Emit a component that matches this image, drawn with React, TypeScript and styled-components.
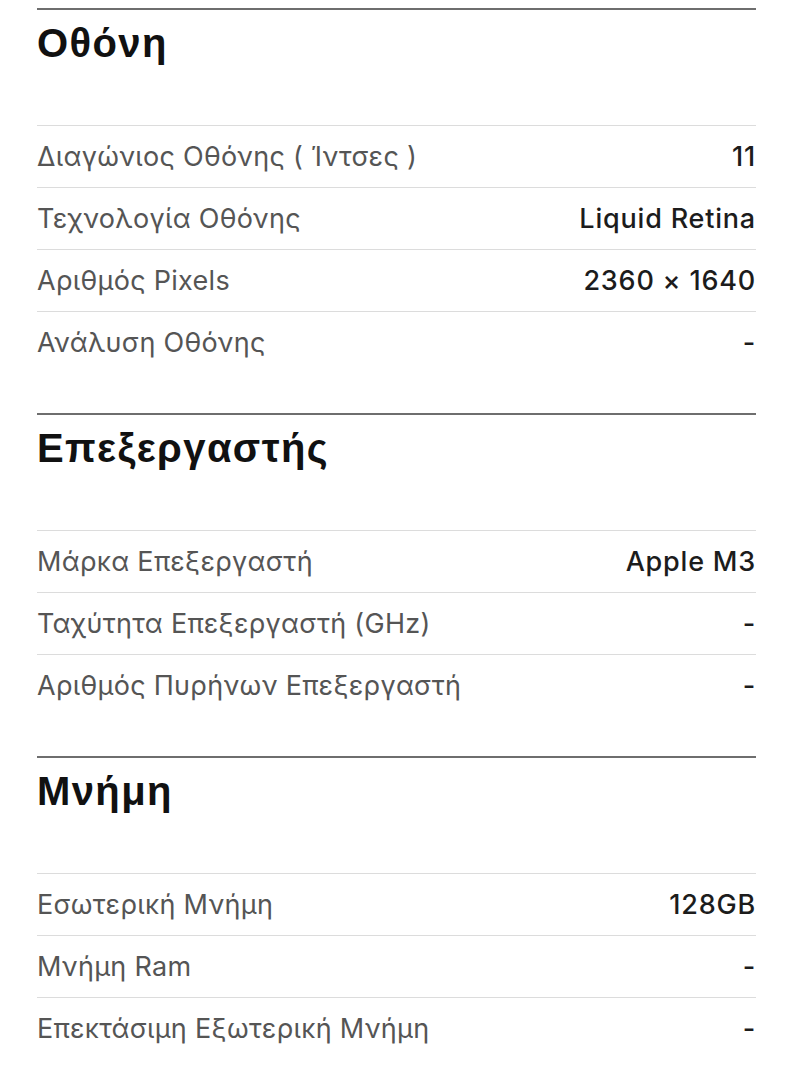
import React from 'react'
import styled, { createGlobalStyle } from 'styled-components'

const GlobalStyle = createGlobalStyle`
  body {
    margin: 0;
    background: #ffffff;
  }
`

const Page = styled.div`
  padding: 8px 37px 0 37px;
  display: flex;
  flex-direction: column;
  gap: 40px;
`
const Section = styled.section`
  border-top: 2px solid #6e6e6e;
`
const Title = styled.h2`
  margin: 0;
  height: 115px;
  padding-top: 10px;
  box-sizing: border-box;
  font-family: 'Liberation Sans', Arial, sans-serif;
  font-weight: 700;
  font-size: 40px;
  line-height: 46px;
  letter-spacing: 1.4px;
  color: #111111;
`
const Row = styled.div`
  display: flex;
  justify-content: space-between;
  align-items: center;
  box-sizing: border-box;
  height: 62px;
  border-top: 1px solid #dcdcdc;
  font-family: 'Inter', 'Noto Sans', sans-serif;
  font-size: 27px;
`
const Label = styled.span`
  color: #555555;
  font-weight: 400;
  letter-spacing: 0.3px;
`
const Value = styled.span`
  color: #1c1c1c;
  font-weight: 500;
  letter-spacing: 0.8px;
`

type Spec = { label: string; value: string }
type Group = { title: string; specs: Spec[] }

const groups: Group[] = [
  {
    title: 'Οθόνη',
    specs: [
      { label: 'Διαγώνιος Οθόνης ( Ίντσες )', value: '11' },
      { label: 'Τεχνολογία Οθόνης', value: 'Liquid Retina' },
      { label: 'Αριθμός Pixels', value: '2360 × 1640' },
      { label: 'Ανάλυση Οθόνης', value: '-' },
    ],
  },
  {
    title: 'Επεξεργαστής',
    specs: [
      { label: 'Μάρκα Επεξεργαστή', value: 'Apple M3' },
      { label: 'Ταχύτητα Επεξεργαστή (GHz)', value: '-' },
      { label: 'Αριθμός Πυρήνων Επεξεργαστή', value: '-' },
    ],
  },
  {
    title: 'Μνήμη',
    specs: [
      { label: 'Εσωτερική Μνήμη', value: '128GB' },
      { label: 'Μνήμη Ram', value: '-' },
      { label: 'Επεκτάσιμη Εξωτερική Μνήμη', value: '-' },
    ],
  },
]

const App = () => (
  <>
    <GlobalStyle />
    <Page>
      {groups.map((g) => (
        <Section key={g.title}>
          <Title>{g.title}</Title>
          {g.specs.map((s) => (
            <Row key={s.label}>
              <Label>{s.label}</Label>
              <Value>{s.value}</Value>
            </Row>
          ))}
        </Section>
      ))}
    </Page>
  </>
)

export default App
